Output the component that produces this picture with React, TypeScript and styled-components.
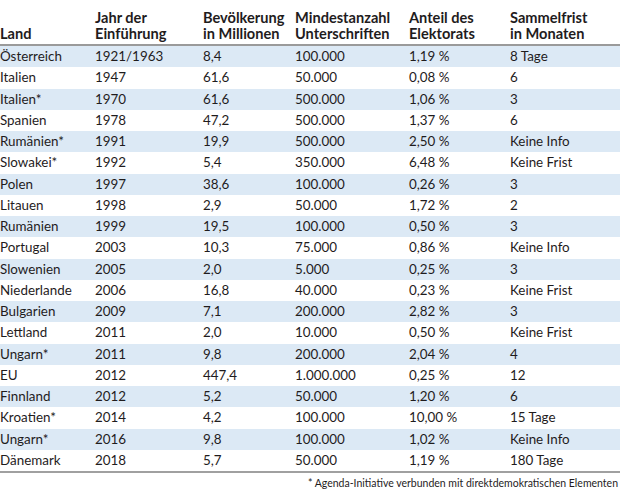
import React from "react";
import styled, { createGlobalStyle } from "styled-components";

const Global = createGlobalStyle`
  html, body { margin: 0; padding: 0; background: #ffffff; }
  body { font-family: Lato, "Open Sans", sans-serif; color: #1f1c1d; }
`;

const Wrap = styled.div`
  width: 620px;
  height: 496px;
  display: flex;
  flex-direction: column;
`;

const Table = styled.table`
  width: 620px;
  border-collapse: collapse;
  table-layout: fixed;
  margin-top: 10px;
`;

const HeadCell = styled.th<{ $w: number }>`
  width: ${(p) => p.$w}px;
  text-align: left;
  vertical-align: bottom;
  font-weight: 700;
  font-size: 14.6px;
  line-height: 16px;
  padding: 0 0 2px 0;
  border-bottom: 2px solid #9a9a9a;
`;

const Row = styled.tr<{ $alt: boolean }>`
  background: ${(p) => (p.$alt ? "#dce9f5" : "#ffffff")};
  height: 21.25px;
  &:last-child td { border-bottom: 2px solid #a0a0a0; }
`;

const Cell = styled.td`
  font-size: 13.4px;
  line-height: 21.25px;
  padding: 0;
  white-space: nowrap;
`;

const Note = styled.div`
  align-self: flex-end;
  font-size: 10.5px;
  margin-top: 4px;
  margin-right: 2px;
`;

const cols: [string, number][] = [
  ["Land", 95],
  ["Jahr der\nEinführung", 108],
  ["Bevölkerung\nin Millionen", 92],
  ["Mindestanzahl\nUnterschriften", 114],
  ["Anteil des\nElektorats", 101],
  ["Sammelfrist\nin Monaten", 110],
];

const data: string[][] = [
  ["Österreich", "1921/1963", "8,4", "100.000", "1,19 %", "8 Tage"],
  ["Italien", "1947", "61,6", "50.000", "0,08 %", "6"],
  ["Italien*", "1970", "61,6", "500.000", "1,06 %", "3"],
  ["Spanien", "1978", "47,2", "500.000", "1,37 %", "6"],
  ["Rumänien*", "1991", "19,9", "500.000", "2,50 %", "Keine Info"],
  ["Slowakei*", "1992", "5,4", "350.000", "6,48 %", "Keine Frist"],
  ["Polen", "1997", "38,6", "100.000", "0,26 %", "3"],
  ["Litauen", "1998", "2,9", "50.000", "1,72 %", "2"],
  ["Rumänien", "1999", "19,5", "100.000", "0,50 %", "3"],
  ["Portugal", "2003", "10,3", "75.000", "0,86 %", "Keine Info"],
  ["Slowenien", "2005", "2,0", "5.000", "0,25 %", "3"],
  ["Niederlande", "2006", "16,8", "40.000", "0,23 %", "Keine Frist"],
  ["Bulgarien", "2009", "7,1", "200.000", "2,82 %", "3"],
  ["Lettland", "2011", "2,0", "10.000", "0,50 %", "Keine Frist"],
  ["Ungarn*", "2011", "9,8", "200.000", "2,04 %", "4"],
  ["EU", "2012", "447,4", "1.000.000", "0,25 %", "12"],
  ["Finnland", "2012", "5,2", "50.000", "1,20 %", "6"],
  ["Kroatien*", "2014", "4,2", "100.000", "10,00 %", "15 Tage"],
  ["Ungarn*", "2016", "9,8", "100.000", "1,02 %", "Keine Info"],
  ["Dänemark", "2018", "5,7", "50.000", "1,19 %", "180 Tage"],
];

export default function App() {
  return (
    <Wrap>
      <Global />
      <Table>
        <thead>
          <tr>
            {cols.map(([label, w]) => (
              <HeadCell key={label} $w={w}>
                {label.split("\n").map((l, i) => (
                  <React.Fragment key={i}>
                    {i > 0 && <br />}
                    {l}
                  </React.Fragment>
                ))}
              </HeadCell>
            ))}
          </tr>
        </thead>
        <tbody>
          {data.map((r, i) => (
            <Row key={i} $alt={i % 2 === 0}>
              {r.map((c, j) => (
                <Cell key={j}>{c}</Cell>
              ))}
            </Row>
          ))}
        </tbody>
      </Table>
      <Note>* Agenda-Initiative verbunden mit direktdemokratischen Elementen</Note>
    </Wrap>
  );
}
